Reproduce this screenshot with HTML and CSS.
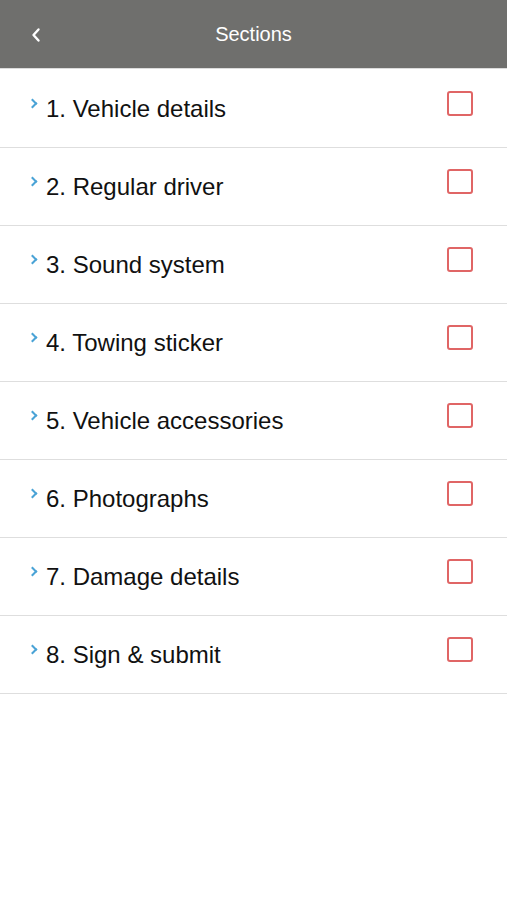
FILE: index.html
```html
<!DOCTYPE html>
<html lang="en">
<head>
    <meta charset="UTF-8">
    <meta name="viewport" content="width=device-width, initial-scale=1.0">
    <title>Sections</title>
    <link rel="stylesheet" href="styles.css">
</head>
<body>
    <header class="topbar">
        <button class="back-btn" aria-label="Back">
            <svg width="12" height="16" viewBox="0 0 12 16"><path d="M8.5 2.5 L3.5 8 L8.5 13.5" fill="none" stroke="#fff" stroke-width="2.4" stroke-linecap="round" stroke-linejoin="round"/></svg>
        </button>
        <h1 class="title">Sections</h1>
    </header>

    <ul class="sections">
        <li class="section-row"><span class="chev"></span><span class="label">1. Vehicle details</span><span class="check"></span></li>
        <li class="section-row"><span class="chev"></span><span class="label">2. Regular driver</span><span class="check"></span></li>
        <li class="section-row"><span class="chev"></span><span class="label">3. Sound system</span><span class="check"></span></li>
        <li class="section-row"><span class="chev"></span><span class="label">4. Towing sticker</span><span class="check"></span></li>
        <li class="section-row"><span class="chev"></span><span class="label">5. Vehicle accessories</span><span class="check"></span></li>
        <li class="section-row"><span class="chev"></span><span class="label">6. Photographs</span><span class="check"></span></li>
        <li class="section-row"><span class="chev"></span><span class="label">7. Damage details</span><span class="check"></span></li>
        <li class="section-row"><span class="chev"></span><span class="label">8. Sign &amp; submit</span><span class="check"></span></li>
    </ul>
</body>
</html>
```

FILE: styles.css
```css
body {
    margin: 0;
    font-family: "Liberation Sans", Arial, sans-serif;
    background-color: #fff;
}

.topbar {
    height: 68px;
    background-color: #6f6f6d;
    display: flex;
    align-items: center;
    justify-content: center;
    position: relative;
    border-bottom: 1px solid #dcdcdc;
}

.back-btn {
    position: absolute;
    left: 30px;
    top: 27px;
    background: none;
    border: none;
    padding: 0;
    width: 12px;
    height: 16px;
    cursor: pointer;
}

.title {
    margin: 0;
    font-size: 20px;
    font-weight: normal;
    color: #fff;
}

.sections {
    list-style: none;
    margin: 0;
    padding: 1px 0 0;
}

.section-row {
    height: 77px;
    border-bottom: 1px solid #dedede;
    display: flex;
    align-items: flex-start;
    padding: 0 34px 0 29px;
}

.chev {
    width: 5px;
    height: 5px;
    border-top: 2px solid #4aa3d6;
    border-right: 2px solid #4aa3d6;
    transform: rotate(45deg);
    margin-top: 30px;
    margin-right: 10px;
}

.label {
    flex: 1;
    font-size: 24px;
    color: #111;
    margin-top: 25px;
}

.check {
    width: 22px;
    height: 21px;
    border: 2.5px solid #e06565;
    border-radius: 3px;
    margin-top: 21px;
}
```
